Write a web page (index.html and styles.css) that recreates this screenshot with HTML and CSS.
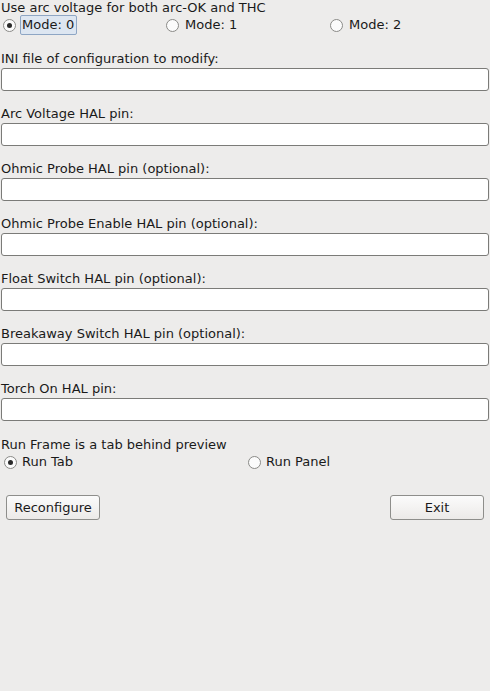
FILE: index.html
```html
<!DOCTYPE html>
<html>
<head>
<meta charset="utf-8">
<link rel="stylesheet" href="styles.css">
</head>
<body>
<div class="app">
  <div class="heading">Use arc voltage for both arc-OK and THC</div>
  <div class="radios three">
    <label class="radio"><span class="dot checked"></span><span class="rlabel focus">Mode: 0</span></label>
    <label class="radio"><span class="dot"></span><span class="rlabel">Mode: 1</span></label>
    <label class="radio"><span class="dot"></span><span class="rlabel">Mode: 2</span></label>
  </div>
  <div class="fields">
    <div class="field"><div class="flabel">INI file of configuration to modify:</div><div class="entry"></div></div>
    <div class="field"><div class="flabel">Arc Voltage HAL pin:</div><div class="entry"></div></div>
    <div class="field"><div class="flabel">Ohmic Probe HAL pin (optional):</div><div class="entry"></div></div>
    <div class="field"><div class="flabel">Ohmic Probe Enable HAL pin (optional):</div><div class="entry"></div></div>
    <div class="field"><div class="flabel">Float Switch HAL pin (optional):</div><div class="entry"></div></div>
    <div class="field"><div class="flabel">Breakaway Switch HAL pin (optional):</div><div class="entry"></div></div>
    <div class="field"><div class="flabel">Torch On HAL pin:</div><div class="entry"></div></div>
  </div>
  <div class="heading run">Run Frame is a tab behind preview</div>
  <div class="radios two">
    <label class="radio"><span class="dot checked"></span><span class="rlabel">Run Tab</span></label>
    <label class="radio"><span class="dot"></span><span class="rlabel">Run Panel</span></label>
  </div>
  <div class="buttons">
    <div class="btn">Reconfigure</div>
    <div class="btn">Exit</div>
  </div>
</div>
</body>
</html>
```
FILE: styles.css
```css
html, body {
  margin: 0;
  padding: 0;
  background: #edeceb;
  height: 100%;
}
body {
  font-family: "DejaVu Sans", sans-serif;
  font-size: 13px;
  color: #1a1a1a;
}
.app {
  display: flex;
  flex-direction: column;
}
.heading {
  height: 15px;
  line-height: 15px;
  padding-left: 1px;
  white-space: nowrap;
}
.radios {
  display: grid;
  height: 20px;
  align-items: center;
}
.radios.three {
  grid-template-columns: 163px 164px 163px;
}
.radios.two {
  grid-template-columns: 244px 246px;
  height: 20px;
}
.radio {
  display: flex;
  align-items: center;
  padding-left: 3px;
}
.radios.two .radio {
  padding-left: 4px;
}
.dot {
  width: 11px;
  height: 11px;
  border: 1px solid #8a8a87;
  border-radius: 50%;
  background: #fbfbfb;
  position: relative;
  flex: none;
}
.dot.checked::after {
  content: "";
  position: absolute;
  left: 3px;
  top: 3px;
  width: 5px;
  height: 5px;
  border-radius: 50%;
  background: #2a2a2a;
}
.rlabel {
  margin-left: 4px;
  padding: 1px 2px 2px 1px;
  border: 1px solid transparent;
  line-height: 15px;
}
.radios.two .rlabel {
  margin-left: 3px;
}
.rlabel.focus {
  background: #dde6f1;
  border-color: #8ea6c4;
  border-radius: 2px;
}
.fields {
  display: flex;
  flex-direction: column;
  gap: 15px;
  margin-top: 16px;
}
.field {
  display: flex;
  flex-direction: column;
  gap: 2px;
}
.flabel {
  height: 15px;
  line-height: 15px;
  padding-left: 1px;
}
.entry {
  height: 21px;
  margin: 0 1px;
  border: 1px solid #7b7b78;
  border-radius: 3px;
  background: #ffffff;
}
.heading.run {
  margin-top: 16px;
}
.buttons {
  display: flex;
  justify-content: space-between;
  padding: 0 6px;
  margin-top: 23px;
}
.btn {
  width: 92px;
  height: 23px;
  line-height: 24px;
  text-align: center;
  border: 1px solid #8e8e8b;
  border-radius: 3px;
  background: linear-gradient(#fbfbfb, #eceae8);
}
```
